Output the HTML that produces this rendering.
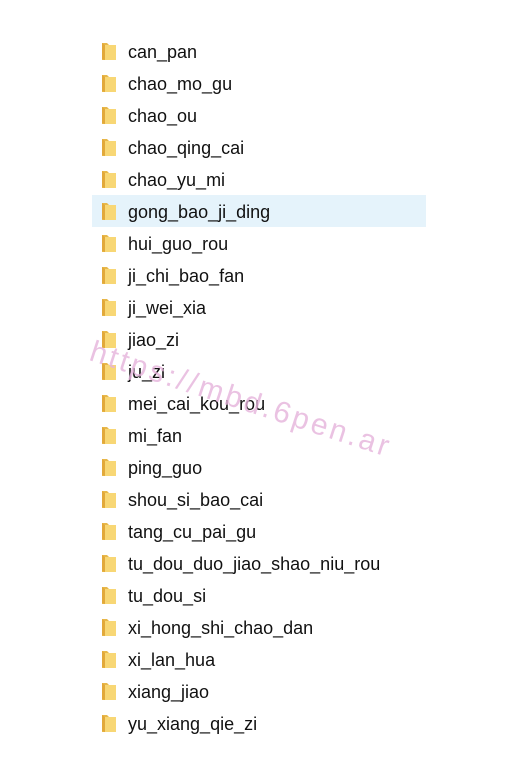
<!DOCTYPE html><html><head><style>
body{margin:0;width:517px;height:779px;background:#fff;position:relative;overflow:hidden;font-family:"Liberation Sans","Noto Sans CJK SC",sans-serif}
.r{position:absolute;left:92px;width:334px;height:32px}
.r.s{background:#e5f3fb}
.r svg{position:absolute;left:9px;top:7px}
.r span{position:absolute;left:36px;top:7px;font-size:18px;color:#111}
.wm{position:absolute;left:96px;top:335px;font-size:30px;color:#e6b4dc;transform:rotate(18deg);transform-origin:0 0;letter-spacing:3px;white-space:nowrap;opacity:.8}
</style></head><body>
<div id="l"></div>
<script>
var n=["can_pan","chao_mo_gu","chao_ou","chao_qing_cai","chao_yu_mi","gong_bao_ji_ding","hui_guo_rou","ji_chi_bao_fan","ji_wei_xia","jiao_zi","ju_zi","mei_cai_kou_rou","mi_fan","ping_guo","shou_si_bao_cai","tang_cu_pai_gu","tu_dou_duo_jiao_shao_niu_rou","tu_dou_si","xi_hong_shi_chao_dan","xi_lan_hua","xiang_jiao","yu_xiang_qie_zi"];
var h="";n.forEach(function(t,i){h+='<div class="r'+(i==5?' s':'')+'" style="top:'+(35+32*i)+'px"><svg width="16" height="19" viewBox="0 0 16 19"><path d="M1 1h5l2 2h7v15H1z" fill="#e8b84a"/><path d="M4 3l11-0v15H4z" fill="#f8d775"/><path d="M1 1l3 2v15l-3-1z" fill="#e2a93a"/></svg><span>'+t+'</span></div>'});
document.getElementById("l").innerHTML=h;
</script>
<div class="wm">https://mbd.6pen.ar</div>
</body></html>
